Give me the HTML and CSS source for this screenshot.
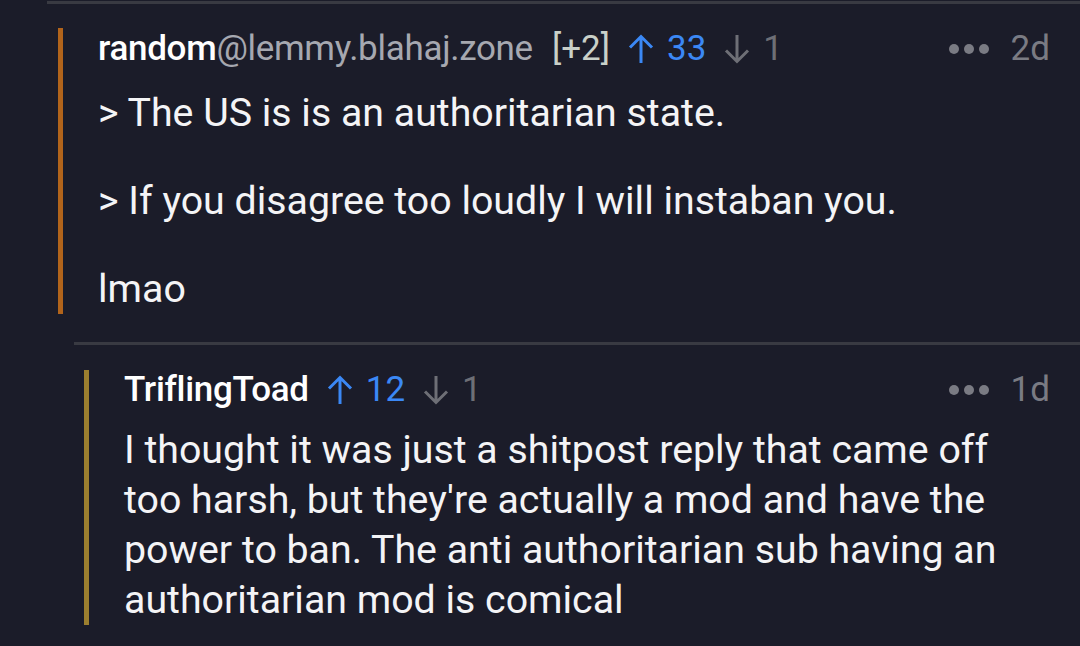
FILE: index.html
```html
<!DOCTYPE html>
<html>
<head>
<meta charset="utf-8">
<link rel="stylesheet" href="styles.css">
</head>
<body>
<div class="thread">
  <div class="divider"></div>
  <div class="comment depth1">
    <div class="bar bar-orange"></div>
    <div class="content">
      <div class="header">
        <span class="user">random<span class="instance">@lemmy.blahaj.zone</span></span>
        <span class="edits">[+2]</span>
        <span class="vote up">
          <svg class="arrow" viewBox="0 0 28 32"><path d="M14 30V4M3 14.5L14 3.5 25 14.5" fill="none" stroke="currentColor" stroke-width="3"/></svg>33</span>
        <span class="vote down">
          <svg class="arrow" viewBox="0 0 28 32"><path d="M14 2v26M3 17.5l11 11 11-11" fill="none" stroke="currentColor" stroke-width="3"/></svg>1</span>
        <span class="spacer"></span>
        <span class="dots"><i></i><i></i><i></i></span>
        <span class="time">2d</span>
      </div>
      <div class="body">
        <p>&gt; The US is is an authoritarian state.</p>
        <p>&gt; If you disagree too loudly I will instaban you.</p>
        <p>lmao</p>
      </div>
    </div>
  </div>
  <div class="nested">
    <div class="divider"></div>
    <div class="comment depth2">
      <div class="bar bar-gold"></div>
      <div class="content">
        <div class="header">
          <span class="user">TriflingToad</span>
          <span class="vote up">
            <svg class="arrow" viewBox="0 0 28 32"><path d="M14 30V4M3 14.5L14 3.5 25 14.5" fill="none" stroke="currentColor" stroke-width="3"/></svg>12</span>
          <span class="vote down">
            <svg class="arrow" viewBox="0 0 28 32"><path d="M14 2v26M3 17.5l11 11 11-11" fill="none" stroke="currentColor" stroke-width="3"/></svg>1</span>
          <span class="spacer"></span>
          <span class="dots"><i></i><i></i><i></i></span>
          <span class="time">1d</span>
        </div>
        <div class="body tight">
          <p>I thought it was just a shitpost reply that came off too harsh, but they're actually a mod and have the power to ban. The anti authoritarian sub having an authoritarian mod is comical</p>
        </div>
      </div>
    </div>
  </div>
</div>
</body>
</html>
```

FILE: styles.css
```css
html, body {
  margin: 0;
  padding: 0;
  background: #1b1c29;
  width: 1080px;
  height: 646px;
  overflow: hidden;
}

body {
  font-family: Roboto, "Liberation Sans", sans-serif;
  color: #f4f4f6;
}

.thread {
  padding-left: 47px;
  padding-top: 1px;
}

.divider {
  height: 3px;
  background: #393a42;
}

.comment {
  display: flex;
  padding-right: 30px;
}

.depth1 {
  margin-top: 24px;
  padding-left: 11px;
}

.depth2 {
  margin-top: 25px;
  padding-left: 10px;
}

.nested {
  margin-top: 28px;
  margin-left: 27px;
}

.bar {
  width: 5px;
  flex: none;
}

.bar-orange { background: #b2641b; }
.bar-gold { background: #9c7f2f; }

.content {
  flex: 1;
  padding-left: 35px;
}

.header {
  display: flex;
  align-items: center;
  height: 40px;
  line-height: 40px;
  margin-top: 1px;
  margin-bottom: 19px;
  font-size: 35px;
  white-space: nowrap;
}

.depth2 .header {
  margin-top: 0;
  margin-bottom: 15px;
}

.user {
  font-weight: 500;
  color: #ffffff;
  letter-spacing: -0.3px;
}

.instance {
  font-weight: 400;
  color: #a6a8b0;
}

.edits {
  margin-left: 19px;
  color: #c9d0c8;
}

.vote {
  display: inline-flex;
  align-items: center;
}

.vote .arrow {
  width: 28px;
  height: 32px;
  margin-right: 12px;
}

.up { color: #3b88f5; margin-left: 17px; }
.down { color: #6e6f76; margin-left: 17px; }

.spacer { flex: 1; }

.dots {
  display: inline-flex;
  gap: 5px;
  margin-right: 22px;
}

.dots i {
  width: 10px;
  height: 10px;
  border-radius: 50%;
  background: #7a7b83;
}

.time {
  color: #7a7b83;
}

.body {
  font-size: 39.3px;
  line-height: 50px;
  color: #f4f4f6;
}

.body p {
  margin: 0 0 38px;
}

.body p:last-child {
  margin-bottom: 0;
}

.tight {
  padding-right: 50px;
}
```
